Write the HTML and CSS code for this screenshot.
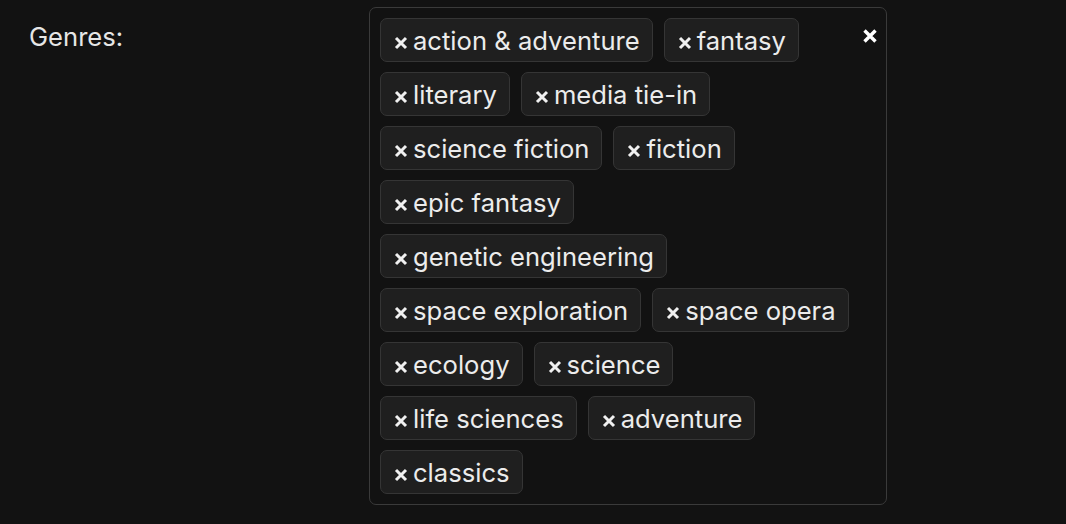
FILE: index.html
```html
<!DOCTYPE html>
<html lang="en">
<head>
  <meta charset="UTF-8" />
  <title>Genres</title>
  <link rel="stylesheet" href="styles.css">
</head>
<body>
  <div class="field">
    <label class="field-label">Genres:</label>
    <div class="tag-box">
      <div class="tags">
        <span class="tag"><svg class="tag-x" viewBox="0 0 14 14"><path d="M2 2L12 12M12 2L2 12"/></svg>action &amp; adventure</span>
        <span class="tag"><svg class="tag-x" viewBox="0 0 14 14"><path d="M2 2L12 12M12 2L2 12"/></svg>fantasy</span>
        <span class="tag"><svg class="tag-x" viewBox="0 0 14 14"><path d="M2 2L12 12M12 2L2 12"/></svg>literary</span>
        <span class="tag"><svg class="tag-x" viewBox="0 0 14 14"><path d="M2 2L12 12M12 2L2 12"/></svg>media tie-in</span>
        <span class="tag"><svg class="tag-x" viewBox="0 0 14 14"><path d="M2 2L12 12M12 2L2 12"/></svg>science fiction</span>
        <span class="tag"><svg class="tag-x" viewBox="0 0 14 14"><path d="M2 2L12 12M12 2L2 12"/></svg>fiction</span>
        <span class="tag"><svg class="tag-x" viewBox="0 0 14 14"><path d="M2 2L12 12M12 2L2 12"/></svg>epic fantasy</span>
        <span class="tag"><svg class="tag-x" viewBox="0 0 14 14"><path d="M2 2L12 12M12 2L2 12"/></svg>genetic engineering</span>
        <span class="tag"><svg class="tag-x" viewBox="0 0 14 14"><path d="M2 2L12 12M12 2L2 12"/></svg>space exploration</span>
        <span class="tag"><svg class="tag-x" viewBox="0 0 14 14"><path d="M2 2L12 12M12 2L2 12"/></svg>space opera</span>
        <span class="tag"><svg class="tag-x" viewBox="0 0 14 14"><path d="M2 2L12 12M12 2L2 12"/></svg>ecology</span>
        <span class="tag"><svg class="tag-x" viewBox="0 0 14 14"><path d="M2 2L12 12M12 2L2 12"/></svg>science</span>
        <span class="tag"><svg class="tag-x" viewBox="0 0 14 14"><path d="M2 2L12 12M12 2L2 12"/></svg>life sciences</span>
        <span class="tag"><svg class="tag-x" viewBox="0 0 14 14"><path d="M2 2L12 12M12 2L2 12"/></svg>adventure</span>
        <span class="tag"><svg class="tag-x" viewBox="0 0 14 14"><path d="M2 2L12 12M12 2L2 12"/></svg>classics</span>
      </div>
      <button class="clear"><svg viewBox="0 0 16 16"><path d="M2.5 2.5L13.5 13.5M13.5 2.5L2.5 13.5"/></svg></button>
    </div>
  </div>
</body>
</html>
```

FILE: styles.css
```css
body {
  margin: 0;
  background: #121212;
  color: #e6e6e6;
  font-family: Inter, 'Noto Sans', sans-serif;
  font-size: 25.6px;
}

.field {
  display: flex;
  padding-top: 7px;
}

.field-label {
  width: 340px;
  padding-left: 29px;
  padding-top: 15px;
  line-height: 30px;
}

.tag-box {
  display: flex;
  width: 498px;
  padding: 10px 8px 10px 10px;
  border: 1px solid #3a3a3a;
  border-radius: 7px;
}

.tags {
  flex: 1;
  display: flex;
  flex-wrap: wrap;
  align-items: flex-start;
  gap: 10px 11px;
}

.tag {
  display: flex;
  align-items: center;
  height: 42px;
  padding: 0 12px 0 13px;
  background: #1f1f1f;
  border: 1px solid #353535;
  border-radius: 7px;
  white-space: nowrap;
  color: #ececec;
}

.tag-x {
  width: 14px;
  height: 14px;
  margin: 5px 5px 0 0;
  flex: none;
  stroke: #f0f0f0;
  stroke-width: 3;
  fill: none;
}

.clear {
  align-self: flex-start;
  background: none;
  border: none;
  padding: 0;
  margin: 10px 0 0 6px;
  width: 16px;
  height: 16px;
}

.clear svg {
  display: block;
  width: 16px;
  height: 16px;
  stroke: #ffffff;
  stroke-width: 3.4;
  fill: none;
}
```
